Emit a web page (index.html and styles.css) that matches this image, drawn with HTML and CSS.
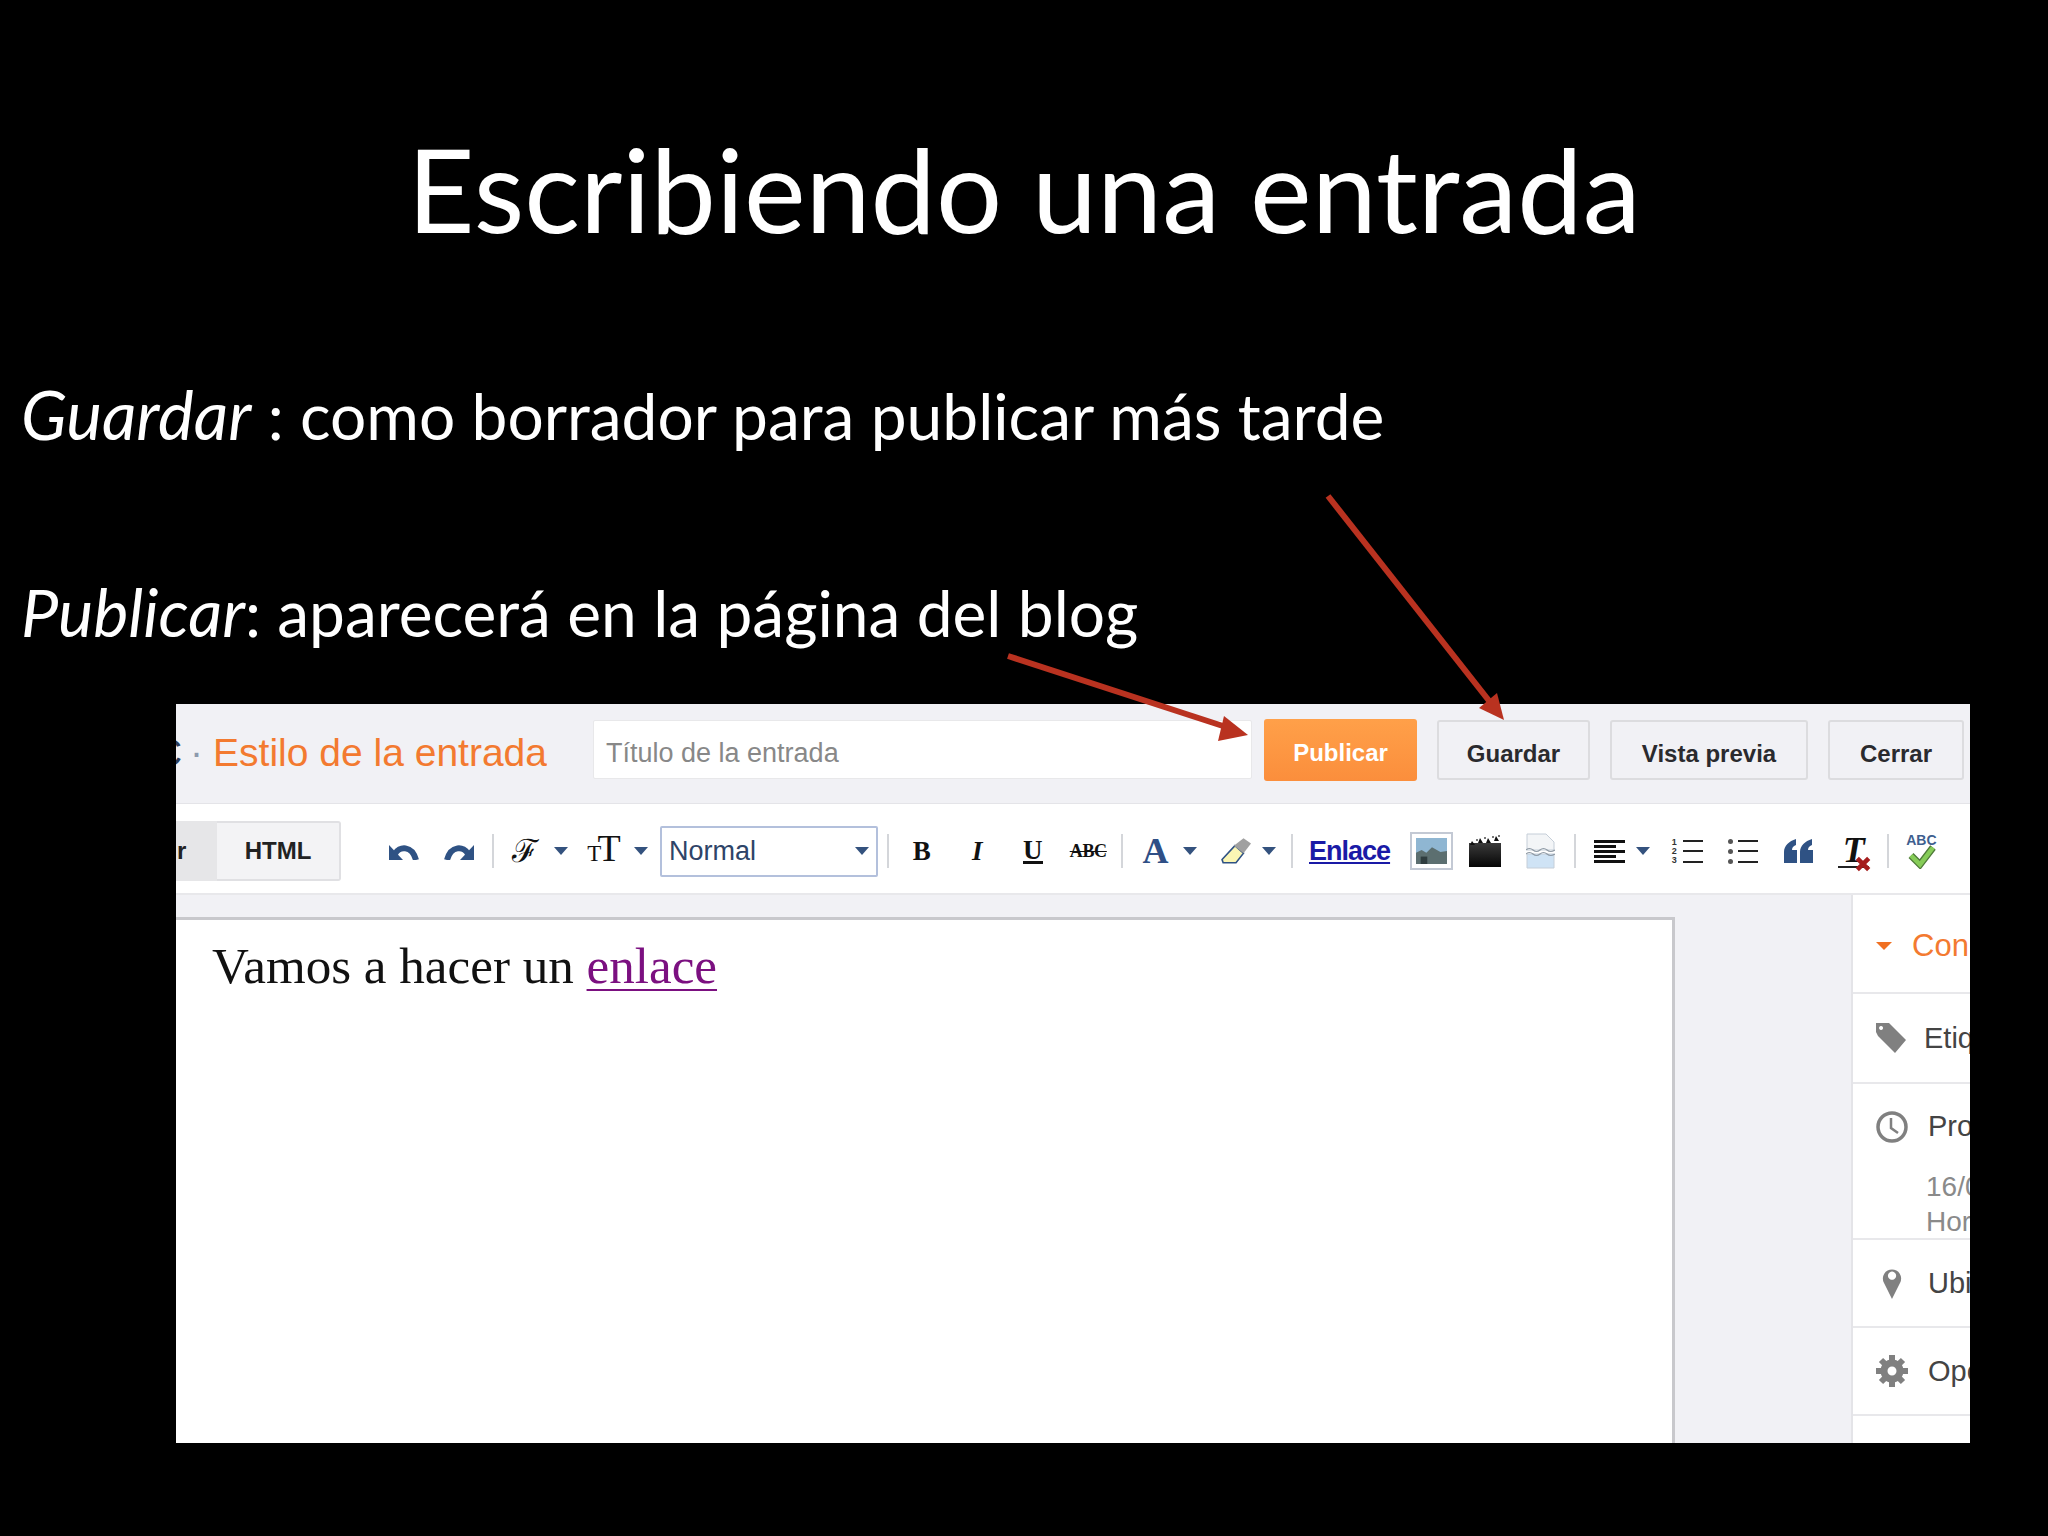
FILE: index.html
```html
<!DOCTYPE html>
<html lang="es">
<head>
<meta charset="UTF-8">
<meta name="viewport" content="width=device-width, initial-scale=1.0">
<title>Escribiendo una entrada</title>
<link rel="stylesheet" href="styles.css">
</head>
<body>

<div class="slide">
  <h1 class="slide-title">Escribiendo una entrada</h1>
  <p class="line line-first"><em>Guardar</em> : como borrador para publicar más tarde</p>
  <p class="line line-second"><em>Publicar</em>: aparecerá en la página del blog</p>

  <div class="shot">
    <!-- barra superior -->
    <div class="header">
      <div class="crumb"><span class="crumb-blog">C</span><span class="crumb-dot">·</span><span class="crumb-title">Estilo de la entrada</span></div>
      <div class="title-input">Título de la entrada</div>
      <div class="action action-primary">Publicar</div>
      <div class="action action-save">Guardar</div>
      <div class="action action-preview">Vista previa</div>
      <div class="action action-close">Cerrar</div>
    </div>

    <!-- barra de herramientas -->
    <div class="toolbar">
      <div class="tab tab-compose">r</div>
      <div class="tab tab-html">HTML</div>

      <div class="btn btn-first">
        <svg class="icon-undo" viewBox="0 0 30 17"><path d="M0 2v15h14z" fill="#2f5284"/><path d="M6 11C10 3 23 2 27 17" fill="none" stroke="#2f5284" stroke-width="6"/></svg>
      </div>
      <div class="btn">
        <svg class="icon-undo flip" viewBox="0 0 30 17"><path d="M0 2v15h14z" fill="#2f5284"/><path d="M6 11C10 3 23 2 27 17" fill="none" stroke="#2f5284" stroke-width="6"/></svg>
      </div>
      <span class="sep"></span>

      <div class="btn btn-drop"><span class="glyph-font">ℱ</span><i class="caret"></i></div>
      <div class="btn btn-drop"><span class="glyph-size"><small>T</small>T</span><i class="caret"></i></div>
      <div class="select">Normal<i class="caret"></i></div>
      <span class="sep"></span>

      <div class="btn"><b class="glyph-style">B</b></div>
      <div class="btn"><b class="glyph-style glyph-italic">I</b></div>
      <div class="btn"><b class="glyph-style glyph-under">U</b></div>
      <div class="btn"><b class="glyph-strike">ABC</b></div>
      <span class="sep"></span>

      <div class="btn btn-drop"><span class="glyph-color">A</span><i class="caret"></i></div>
      <div class="btn btn-drop">
        <svg class="icon-marker" viewBox="0 0 28 24">
          <path d="M1 20 13 7l8 7-7 9H2z" fill="#fbf6b4" stroke="#2f5284" stroke-width="1.5"/>
          <path d="M12 7l9-7 7 5-7 9z" fill="#a0a0a0"/>
        </svg>
        <i class="caret"></i>
      </div>
      <span class="sep"></span>

      <a class="link-btn">Enlace</a>
      <div class="btn">
        <span class="icon-image">
          <svg viewBox="0 0 33 28" preserveAspectRatio="none">
            <rect width="33" height="28" fill="#8fb6d2"/>
            <path d="M0 28V16l6-3 5 3 6-6 9 5 7-1v14z" fill="#5c6f70"/>
            <rect x="5" y="20" width="7" height="8" fill="#2f3d3f"/>
          </svg>
        </span>
      </div>
      <div class="btn">
        <svg class="icon-clapper" viewBox="0 0 32 32">
          <defs><linearGradient id="clapBody" x1="0" y1="0" x2="0" y2="1"><stop offset="0" stop-color="#3a3a3a"/><stop offset="1" stop-color="#050505"/></linearGradient></defs>
          <path d="M0 8h32v24H0z" fill="url(#clapBody)"/>
          <path d="M1 10l2-4 3 4zM9 8l2-5 3 5zM17 8l2-5 3 5zM25 6l2-5 3 5z" fill="#111"/>
          <path d="M7 5h2M15 3h2M23 2h2M29 1h2" stroke="#777" stroke-width="2"/>
        </svg>
      </div>
      <div class="btn">
        <svg class="icon-doc" viewBox="0 0 29 36">
          <path d="M1 1h19l8 8v8H1z" fill="#f3f5f7" stroke="#c5ced8"/>
          <path d="M1 21h27v14H1z" fill="#cfe3f5" stroke="#c5ced8"/>
          <path d="M0 17q3.500-3 7 0t7 0 7 0 8 0M0 21q3.500-3 7 0t7 0 7 0 8 0" fill="none" stroke="#8f9aa5" stroke-width="1.2"/>
        </svg>
      </div>
      <span class="sep"></span>

      <div class="btn btn-drop">
        <span class="icon-lines"><i></i><i class="short"></i><i></i><i class="short"></i><i></i></span>
        <i class="caret"></i>
      </div>
      <div class="btn">
        <span class="list-icon"><span class="list-marks"><span>1</span><span>2</span><span>3</span></span><span class="list-bars"><i></i><i></i><i></i></span></span>
      </div>
      <div class="btn">
        <span class="list-icon"><span class="list-marks list-dots"><i></i><i></i><i></i></span><span class="list-bars"><i></i><i></i><i></i></span></span>
      </div>
      <div class="btn">
        <svg class="icon-quote" viewBox="0 0 29 24" preserveAspectRatio="none">
          <path d="M0 24V13C0 7 5 2 12 0v6c-2 1-4 2-4 5h5v13zM16 24V13c0-6 5-11 12-13v6c-2 1-4 2-4 5h5v13z" fill="#2f5284"/>
        </svg>
      </div>
      <div class="btn">
        <span class="glyph-clear">T<svg viewBox="0 0 14 14"><path d="M2 2l10 10M12 2 2 12" stroke="#a51d1d" stroke-width="4"/></svg></span>
      </div>
      <span class="sep"></span>

      <div class="btn">
        <span class="glyph-spell">ABC<svg viewBox="0 0 30 24"><path d="M5 11l9 9L27 3" fill="none" stroke="#4f7a3a" stroke-width="7"/><path d="M5 11l9 9L27 3" fill="none" stroke="#86cc58" stroke-width="4.500"/></svg></span>
      </div>
    </div>

    <!-- editor y ajustes -->
    <div class="main">
      <div class="editor">Vamos a hacer un <a class="editor-link">enlace</a></div>
      <div class="side">
        <div class="side-row side-open"><i class="caret caret-orange"></i><span>Con</span></div>
        <div class="side-row side-tags">
          <svg class="side-icon side-tag" viewBox="0 0 30 30"><path d="M0 0h13l17 17-11 13L2 13 0 9zM5 3a2 2 0 1 0 .1 0z" fill="#808080" fill-rule="evenodd"/></svg>
          <span>Etiq</span>
        </div>
        <div class="side-block">
          <div class="side-row side-plain">
            <svg class="side-icon" viewBox="0 0 32 32"><circle cx="16" cy="16" r="14" fill="none" stroke="#808080" stroke-width="3.500"/><path d="M15 7v10l7 5" fill="none" stroke="#808080" stroke-width="2.500"/></svg>
            <span>Pro</span>
          </div>
          <div class="side-detail">16/0<br>Hor</div>
        </div>
        <div class="side-row">
          <svg class="side-icon" viewBox="0 0 32 35"><path d="M16 35 7 17a10 10 0 1 1 18 0zM16 5a4.500 4.500 0 1 0 .1 0z" fill="#808080" fill-rule="evenodd"/></svg>
          <span>Ubi</span>
        </div>
        <div class="side-row">
          <svg class="side-icon" viewBox="0 0 32 32"><circle cx="16" cy="16" r="8" fill="none" stroke="#808080" stroke-width="7"/><path d="M16 0v32M0 16h32M5 5l22 22M27 5 5 27" stroke="#808080" stroke-width="6" stroke-dasharray="6 20"/></svg>
          <span>Opc</span>
        </div>
      </div>
    </div>
  </div>

  <!-- flechas rojas encima de la captura -->
  <svg class="arrows" viewBox="0 0 2048 1536">
    <path d="M1008 656 1226 727" stroke="#b93220" stroke-width="6" fill="none"/>
    <path d="M1248 735 1224 716 1218 741z" fill="#b93220"/>
    <path d="M1328 496 1490 702" stroke="#b93220" stroke-width="6" fill="none"/>
    <path d="M1504 720 1497 693 1479 708z" fill="#b93220"/>
  </svg>
</div>

</body>
</html>
```

FILE: styles.css
```css
body {
  margin: 0;
  background-color: #000;
  font-family: "Liberation Sans", Arial, sans-serif;
}
.slide {
  position: relative;
  width: 2048px;
  height: 1536px;
  overflow: hidden;
  color: #fff;
}
.slide-title {
  margin: 0;
  padding-top: 118px;
  height: 140px;
  line-height: 140px;
  text-align: center;
  font-family: Lato, "Open Sans", sans-serif;
  font-size: 116.7px;
  font-weight: 400;
}
.line {
  margin: 0;
  padding-left: 21px;
  font-family: Lato, "Open Sans", sans-serif;
  font-size: 64px;
  line-height: 80px;
  white-space: nowrap;
}
.line em {
  font-size: 67.4px;
  line-height: 0;
}
.line-first {
  margin-top: 118px;
}
.line-second {
  margin-top: 117px;
}
.line-second em {
  font-size: 66.4px;
}
.shot {
  width: 1794px;
  height: 739px;
  margin: 51px 0 0 176px;
  background-color: #f1f1f5;
  color: #333;
  overflow: hidden;
}

/* barra superior */
.header {
  display: flex;
  align-items: center;
  gap: 20px;
  height: 100px;
  padding-bottom: 8px;
  border-bottom: 1px solid #e4e4e8;
  box-sizing: border-box;
}
.crumb {
  display: flex;
  justify-content: flex-end;
  width: 371px;
  padding-top: 7px;
  overflow: hidden;
  white-space: nowrap;
  font-size: 39px;
  margin-right: 26px;
}
.crumb-blog {
  color: #2c3e5c;
}
.crumb-dot {
  margin: 0 10px 0 8px;
  color: #8d99ad;
}
.crumb-title {
  color: #f37a30;
}
.title-input {
  width: 659px;
  height: 59px;
  line-height: 64px;
  padding-left: 12px;
  box-sizing: border-box;
  background-color: #fff;
  border: 1px solid #e8e8ea;
  border-radius: 2px;
  color: #888;
  font-size: 27px;
  margin-right: -8px;
}
.action {
  height: 60px;
  line-height: 63px;
  box-sizing: border-box;
  border: 2px solid #dcdcdf;
  border-radius: 3px;
  text-align: center;
  font-size: 24px;
  font-weight: 700;
  color: #2a2a2e;
}
.action-primary {
  width: 153px;
  height: 62px;
  line-height: 67px;
  border: none;
  background: linear-gradient(#ffa049, #fb8e3c);
  color: #fff;
}
.action-save {
  width: 153px;
}
.action-preview {
  width: 198px;
}
.action-close {
  width: 136px;
}

/* barra de herramientas */
.toolbar {
  display: flex;
  align-items: center;
  height: 91px;
  padding-top: 5px;
  background-color: #fff;
  border-bottom: 2px solid #e8e8eb;
  box-sizing: border-box;
}
.tab {
  display: flex;
  align-items: center;
  height: 60px;
  box-sizing: border-box;
  font-size: 24px;
  font-weight: 700;
  color: #222;
}
.tab-compose {
  width: 41px;
  padding-left: 1px;
  background-color: #e6e6e8;
}
.tab-html {
  justify-content: center;
  width: 124px;
  background-color: #f3f3f5;
  border: 2px solid #e0e0e3;
  border-left: none;
  border-radius: 0 3px 3px 0;
}
.btn {
  display: flex;
  align-items: center;
  justify-content: center;
  flex-shrink: 0;
  width: 55.5px;
  height: 40px;
}
.btn-first {
  margin-left: 35px;
}
.btn-drop {
  width: 79px;
  gap: 14px;
}
.sep {
  flex-shrink: 0;
  width: 2px;
  height: 34px;
  margin: 0 5px;
  background-color: #d4d6da;
}
.caret {
  display: inline-block;
  flex-shrink: 0;
  width: 0;
  height: 0;
  border-top: 8px solid #34527e;
  border-left: 7px solid transparent;
  border-right: 7px solid transparent;
}
.caret-orange {
  border-top-color: #f07022;
  border-left-width: 8px;
  border-right-width: 8px;
}
.icon-undo {
  width: 30px;
  height: 17px;
}
.flip {
  transform: scaleX(-1);
}
.glyph-font {
  width: 30px;
  font-family: "DejaVu Serif", "Liberation Serif", serif;
  font-size: 32px;
  line-height: 36px;
  color: #111;
  text-align: center;
}
.glyph-size {
  font-family: "Liberation Serif", serif;
  font-size: 38px;
  line-height: 34px;
  color: #111;
  letter-spacing: -1px;
}
.glyph-size small {
  font-size: 23px;
  margin-right: -3px;
}
.select {
  display: flex;
  align-items: center;
  justify-content: space-between;
  flex-shrink: 0;
  width: 218px;
  height: 51px;
  margin: 0 4px 0 3px;
  padding: 0 7px;
  box-sizing: border-box;
  border: 2px solid #b3c0dc;
  border-radius: 2px;
  font-size: 27px;
  color: #2e4468;
}
.glyph-style {
  font-family: "Liberation Serif", serif;
  font-size: 27px;
  line-height: 28px;
  color: #111;
}
.glyph-italic {
  font-style: italic;
}
.glyph-under {
  border-bottom: 3px solid #111;
  line-height: 22px;
}
.glyph-strike {
  font-family: "Liberation Serif", serif;
  font-size: 18px;
  color: #111;
  text-decoration: line-through;
  letter-spacing: -0.3px;
}
.glyph-color {
  margin-left: 4px;
  font-family: "Liberation Serif", serif;
  font-weight: 700;
  font-size: 36px;
  line-height: 34px;
  color: #2f4f86;
}
.icon-marker {
  width: 30px;
  height: 26px;
  margin: 0 -3px 0 3px;
}
.link-btn {
  flex-shrink: 0;
  width: 81px;
  margin: 0 12px 0 11px;
  font-size: 27px;
  font-weight: 700;
  color: #1a1aa6;
  text-decoration: underline;
  text-align: center;
  letter-spacing: -1px;
}
.icon-image {
  display: block;
  width: 43px;
  height: 38px;
  margin-left: 4px;
  padding: 4px;
  box-sizing: border-box;
  background-color: #fff;
  border: 2px solid #c3c9d4;
}
.icon-image svg {
  display: block;
  width: 100%;
  height: 100%;
}
.icon-clapper {
  width: 32px;
  height: 32px;
}
.icon-doc {
  width: 29px;
  height: 36px;
}
.icon-lines {
  display: flex;
  flex-direction: column;
  gap: 2px;
  width: 31px;
  margin: 0 -3px 0 3px;
}
.icon-lines i {
  display: block;
  height: 3px;
  background-color: #111;
}
.icon-lines .short {
  width: 22px;
}
.list-icon {
  display: flex;
  gap: 4px;
  width: 31px;
  height: 27px;
}
.list-marks {
  display: flex;
  flex-direction: column;
  justify-content: space-between;
  width: 7px;
  font-size: 9px;
  line-height: 9px;
  font-weight: 700;
  color: #333;
}
.list-dots {
  align-items: center;
  padding: 1px 0;
  box-sizing: border-box;
}
.list-dots i {
  display: block;
  width: 5px;
  height: 5px;
  border-radius: 50%;
  background-color: #555;
}
.list-bars {
  display: flex;
  flex-direction: column;
  justify-content: space-between;
  flex: 1;
  padding: 2px 0;
  box-sizing: border-box;
}
.list-bars i {
  display: block;
  height: 2px;
  background-color: #222;
}
.icon-quote {
  width: 29px;
  height: 24px;
}
.glyph-clear {
  position: relative;
  width: 31px;
  border-bottom: 2px solid #222;
  font-family: "Liberation Serif", serif;
  font-style: italic;
  font-weight: 700;
  font-size: 36px;
  line-height: 32px;
  color: #111;
  text-align: center;
}
.glyph-clear svg {
  position: absolute;
  right: -2px;
  bottom: -6px;
  width: 16px;
  height: 16px;
}
.glyph-spell {
  position: relative;
  display: block;
  width: 30px;
  height: 36px;
  font-size: 14px;
  font-weight: 700;
  line-height: 14px;
  color: #3f5f8f;
  text-align: center;
}
.glyph-spell svg {
  position: absolute;
  left: 0;
  bottom: 0;
  width: 30px;
  height: 25px;
}

/* editor y ajustes */
.main {
  display: flex;
  height: 548px;
  background-color: #f1f1f5;
}
.editor {
  width: 1499px;
  height: 526px;
  margin-top: 22px;
  padding: 16px 0 0 36px;
  box-sizing: border-box;
  background-color: #fff;
  border-top: 3px solid #c8c8cc;
  border-right: 3px solid #c8c8cc;
  font-family: "Liberation Serif", serif;
  font-size: 51.1px;
  line-height: 60px;
  color: #111;
}
.editor-link {
  color: #7b1080;
  text-decoration: underline;
  text-underline-offset: 6px;
  text-decoration-thickness: 2px;
}
.side {
  width: 119px;
  margin-left: 176px;
  background-color: #fff;
  border-left: 2px solid #e4e4e8;
  box-sizing: border-box;
  overflow: hidden;
  color: #444;
  font-size: 29px;
  white-space: nowrap;
}
.side-row {
  display: flex;
  align-items: center;
  gap: 20px;
  height: 88px;
  padding-left: 23px;
  border-bottom: 2px solid #e8e8eb;
  box-sizing: border-box;
}
.side-icon {
  flex-shrink: 0;
  width: 32px;
  height: 32px;
}
.side-tag {
  width: 30px;
  margin-right: -2px;
}
.side-tags {
  height: 90px;
}
.side-open {
  height: 99px;
  padding-top: 5px;
  color: #f37a30;
  font-size: 31px;
}
.side-block {
  height: 156px;
  border-bottom: 2px solid #e8e8eb;
  box-sizing: border-box;
}
.side-plain {
  height: 85px;
  border-bottom: none;
}
.side-detail {
  padding-left: 73px;
  font-size: 28px;
  line-height: 35px;
  color: #8a8a8a;
}
.arrows {
  position: absolute;
  left: 0;
  top: 0;
  width: 2048px;
  height: 1536px;
}
```
